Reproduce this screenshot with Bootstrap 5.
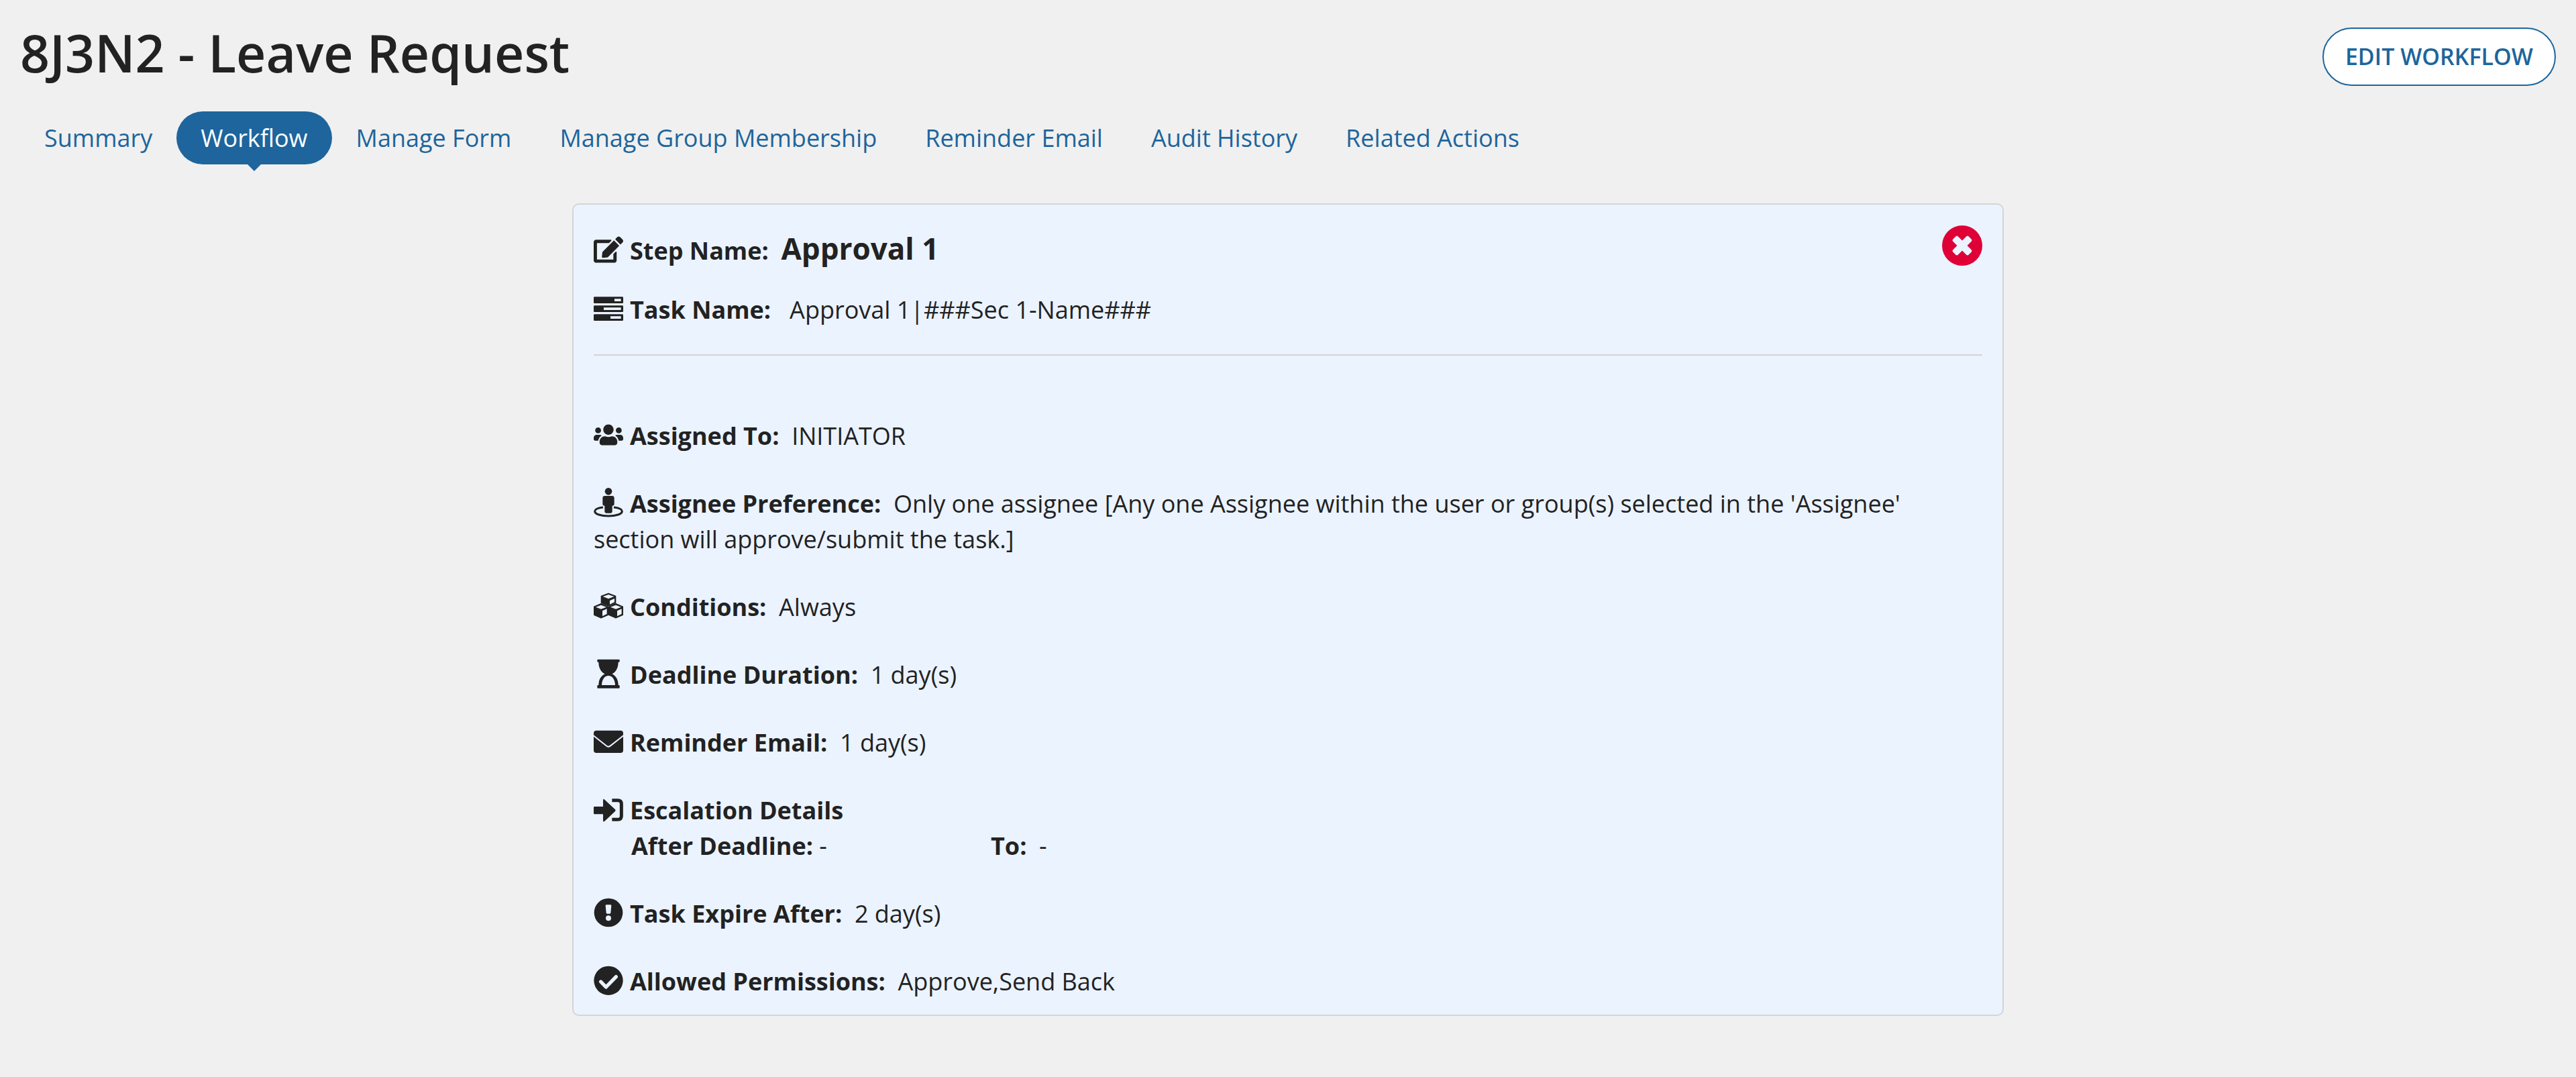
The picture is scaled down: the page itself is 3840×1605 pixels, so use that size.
<!DOCTYPE html>
<html lang="en">
<head>
<meta charset="utf-8">
<meta name="viewport" content="width=device-width, initial-scale=1">
<title>8J3N2 - Leave Request</title>
<link href="https://cdn.jsdelivr.net/npm/bootstrap@5.3.0/dist/css/bootstrap.min.css" rel="stylesheet">
<style>
  :root { --ink: #222; --brand: #1d659c; --panel: #ebf3ff; --rule: #d3d5d6; }
  body { background: #f0f0f0; color: var(--ink); font: 400 36px/53px "Open Sans", sans-serif; }
  .page-head { padding: 30px 30px 0; }
  .page-title { font-size: 77px; line-height: 98px; font-weight: 600; }
  .btn-edit { --bs-btn-color: var(--brand); --bs-btn-bg: #fff; --bs-btn-border-color: var(--brand);
    --bs-btn-hover-color: #fff; --bs-btn-hover-bg: var(--brand); --bs-btn-border-width: 2px;
    --bs-btn-padding-x: 32px; --bs-btn-padding-y: 15px; --bs-btn-font-size: 34px;
    --bs-btn-line-height: 53px; --bs-btn-font-weight: 600; }
  .page-tabs { margin: 38px 30px 58px; --bs-nav-link-color: var(--brand); --bs-nav-link-hover-color: var(--brand);
    --bs-nav-pills-link-active-bg: var(--brand); --bs-nav-pills-border-radius: 40px;
    --bs-nav-link-padding-x: 36px; --bs-nav-link-padding-y: 13px; --bs-nav-link-font-size: 36px; }
  .page-tabs .nav-link { position: relative; }
  .page-tabs .active::after { content: ""; position: absolute; top: 100%; left: 50%; margin-left: -10px;
    border: 10px solid transparent; border-top-color: var(--brand); border-bottom: 0; }
  .step-col { padding: 0 53px 60px; }
  .step-card { --bs-card-bg: var(--panel); --bs-card-border-color: var(--rule); --bs-card-border-width: 2px;
    --bs-card-border-radius: 10px; --bs-card-inner-border-radius: 8px; --bs-card-color: var(--ink); }
  .step-card .card-body { padding: 31px 30px 23px; }
  .step-name { line-height: 68px; margin-bottom: 27px; }
  .step-name strong { font-size: 44px; }
  .step-card hr { margin: 40px 0 93px; border-top: 2px solid var(--rule); opacity: 1; }
  .glyph { width: 44px; height: 44px; vertical-align: -7px; margin-right: 10px; fill: currentColor; }
  .glyph .lit { fill: var(--panel); }
  .glyph .line { fill: none; stroke: currentColor; }
  .glyph .lit-line { fill: none; stroke: var(--panel); }
  .details > li { margin-bottom: 48px; }
  .details > li:last-child { margin-bottom: 0; }
  .escalation { padding-left: 56px; }
  .escalation > li:first-child { flex: 0 0 536px; }
  .btn-remove { width: 60px; height: 60px; color: #de0037; }
  .btn-remove svg { width: 60px; height: 60px; fill: currentColor; }
</style>
</head>
<body>
<header class="page-head d-flex justify-content-between align-items-end">
  <h1 class="page-title mb-0">8J3N2 - Leave Request</h1>
  <button type="button" class="btn btn-edit rounded-pill">EDIT WORKFLOW</button>
</header>

<nav aria-label="Request sections">
  <ul class="nav nav-pills page-tabs">
    <li class="nav-item"><a class="nav-link" href="#summary">Summary</a></li>
    <li class="nav-item"><a class="nav-link active" aria-current="page" href="#workflow">Workflow</a></li>
    <li class="nav-item"><a class="nav-link" href="#form">Manage Form</a></li>
    <li class="nav-item"><a class="nav-link" href="#membership">Manage Group Membership</a></li>
    <li class="nav-item"><a class="nav-link" href="#reminder">Reminder Email</a></li>
    <li class="nav-item"><a class="nav-link" href="#audit">Audit History</a></li>
    <li class="nav-item"><a class="nav-link" href="#related">Related Actions</a></li>
  </ul>
</nav>

<main class="row g-0 justify-content-center">
  <div class="col-7 step-col">
    <section class="card step-card">
      <div class="card-body">
        <div class="d-flex justify-content-between align-items-start">
          <div class="step-name"><svg class="glyph" viewBox="0 0 576 512" aria-hidden="true"><path d="M402.6 83.2l90.2 90.2c3.8 3.8 3.8 10 0 13.8L274.4 405.6l-92.8 10.3c-12.4 1.4-22.9-9.1-21.5-21.5l10.3-92.8L388.8 83.2c3.8-3.8 10-3.8 13.8 0zm162-22.9l-48.8-48.8c-15.2-15.2-39.9-15.2-55.2 0l-35.4 35.4c-3.8 3.8-3.8 10 0 13.8l90.2 90.2c3.8 3.8 10 3.8 13.8 0l35.4-35.4c15.2-15.3 15.2-40 0-55.2zM384 346.2V448H64V128h229.8c3.2 0 6.2-1.3 8.5-3.5l40-40c7.6-7.6 2.2-20.5-8.5-20.5H48C21.5 64 0 85.5 0 112v352c0 26.5 21.5 48 48 48h352c26.5 0 48-21.5 48-48V306.2c0-10.7-12.9-16-20.5-8.5l-40 40c-2.2 2.3-3.5 5.3-3.5 8.5z"/></svg><b>Step Name:</b>&nbsp; <strong>Approval 1</strong></div>
          <button type="button" class="btn btn-remove border-0 p-0 d-flex" aria-label="Remove step">
            <svg viewBox="0 0 182 182" aria-hidden="true"><circle cx="91" cy="91" r="91"/><g fill="#ebf3ff" transform="rotate(45 91 91)"><rect x="41" y="75" width="100" height="32" rx="7"/><rect x="75" y="41" width="32" height="100" rx="7"/></g></svg>
          </button>
        </div>
        <div><svg class="glyph" viewBox="0 0 132 132" aria-hidden="true"><rect y="13" width="132" height="29" rx="4"/><rect y="52" width="132" height="29" rx="4"/><rect y="91" width="132" height="29" rx="4"/><path class="lit" d="M93 22h29v11H93zM45 61h77v11H45zM75 100h47v11H75z"/></svg><b>Task Name:</b>&nbsp;&nbsp; Approval 1|###Sec 1-Name###</div>
        <hr>
        <ul class="details list-unstyled mb-0">
          <li><svg class="glyph" viewBox="0 0 640 512" aria-hidden="true"><path d="M96 224c35.3 0 64-28.7 64-64s-28.7-64-64-64-64 28.7-64 64 28.7 64 64 64zm448 0c35.3 0 64-28.7 64-64s-28.7-64-64-64-64 28.7-64 64 28.7 64 64 64zm32 32h-64c-17.6 0-33.5 7.1-45.1 18.6 40.3 22.1 68.9 62 75.1 109.4h66c17.7 0 32-14.3 32-32v-32c0-35.3-28.7-64-64-64zm-256 0c61.9 0 112-50.1 112-112S381.9 32 320 32 208 82.1 208 144s50.1 112 112 112zm76.8 32h-8.3c-20.8 10-43.9 16-68.5 16s-47.6-6-68.5-16h-8.3C179.6 288 128 339.6 128 403.2V432c0 26.5 21.5 48 48 48h288c26.5 0 48-21.5 48-48v-28.8c0-63.6-51.6-115.2-115.2-115.2zm-223.7-13.4C161.5 263.1 145.6 256 128 256H64c-35.3 0-64 28.7-64 64v32c0 17.7 14.3 32 32 32h65.9c6.3-47.4 34.9-87.3 75.2-109.4z"/></svg><b>Assigned To:</b>&nbsp; INITIATOR</li>
          <li><svg class="glyph" viewBox="0 0 132 132" aria-hidden="true"><circle cx="66" cy="16" r="16"/><path d="M50 36h32q10 0 10 10v26q0 8-9 8v26q0 7-7 7H56q-7 0-7-7V80q-9 0-9-8V46q0-10 10-10z"/><path class="line" stroke-width="9" d="M42 87C18 90 5 97 5 105c0 12 27 21 61 21s61-9 61-21c0-8-13-15-37-18"/></svg><b>Assignee Preference:</b>&nbsp; Only one assignee [Any one Assignee within the user or group(s) selected in the 'Assignee' section will approve/submit the task.]</li>
          <li><svg class="glyph" viewBox="0 0 132 132" aria-hidden="true"><defs><g id="cube"><path stroke="currentColor" stroke-width="4" stroke-linejoin="round" d="M33 56l31 13v37l-31 14L2 106V69z"/><path class="lit" d="M33 62l24 9-24 9-24-9zM39 88l20-9v23l-20 10z"/></g></defs><path stroke="currentColor" stroke-width="4" stroke-linejoin="round" d="M66 10l32 12v30L66 66 34 52V22z"/><path class="lit" d="M66 15l25 9-25 10-25-10zM72 42l21-9v16l-21 10z"/><use href="#cube"/><use href="#cube" x="66"/></svg><b>Conditions:</b>&nbsp; Always</li>
          <li><svg class="glyph" viewBox="0 0 132 132" aria-hidden="true"><path d="M19 2h94q3 0 3 3v6q0 3-3 3h-3c0 26-11 45-28 53 17 8 28 26 28 50h3q3 0 3 3v8q0 3-3 3H19q-3 0-3-3v-8q0-3 3-3h3c0-24 11-42 28-50C33 59 22 40 22 14h-3q-3 0-3-3V5q0-3 3-3z"/><path class="lit" d="M36 117c1-27 14-42 30-42s29 15 30 42z"/></svg><b>Deadline Duration:</b>&nbsp; 1 day(s)</li>
          <li><svg class="glyph" viewBox="0 0 132 132" aria-hidden="true"><rect y="17" width="132" height="100" rx="12"/><path class="lit-line" stroke-width="6" stroke-linejoin="round" d="M-2 39l60 47q8 6 16 0l60-47"/></svg><b>Reminder Email:</b>&nbsp; 1 day(s)</li>
          <li><svg class="glyph" viewBox="0 0 132 132" aria-hidden="true"><path d="M4 54h38V26q0-9 7-3l47 44q4 4 0 8l-47 44q-7 6-7-3V88H4q-4 0-4-4V58q0-4 4-4z"/><path class="line" stroke-width="15" d="M82 26h26q16 0 16 16v54q0 16-16 16H82"/></svg><b>Escalation Details</b>
            <ul class="escalation list-unstyled d-flex">
              <li><b>After Deadline:</b> -</li>
              <li><b>To:</b>&nbsp; -</li>
            </ul>
          </li>
          <li><svg class="glyph" viewBox="0 0 132 132" aria-hidden="true"><circle cx="66" cy="66" r="64"/><path class="lit" d="M57 31h18q4 0 4 4l-3 32q0 4-4 4H60q-4 0-4-4l-3-32q0-4 4-4z"/><circle class="lit" cx="66" cy="91" r="12"/></svg><b>Task Expire After:</b>&nbsp; 2 day(s)</li>
          <li><svg class="glyph" viewBox="0 0 132 132" aria-hidden="true"><circle cx="66" cy="67" r="65"/><path class="lit-line" stroke-width="16" stroke-linecap="round" stroke-linejoin="round" d="M32 72l23 24 45-46"/></svg><b>Allowed Permissions:</b>&nbsp; Approve,Send Back</li>
        </ul>
      </div>
    </section>
  </div>
</main>
<script src="https://cdn.jsdelivr.net/npm/bootstrap@5.3.0/dist/js/bootstrap.bundle.min.js"></script>
</body>
</html>
